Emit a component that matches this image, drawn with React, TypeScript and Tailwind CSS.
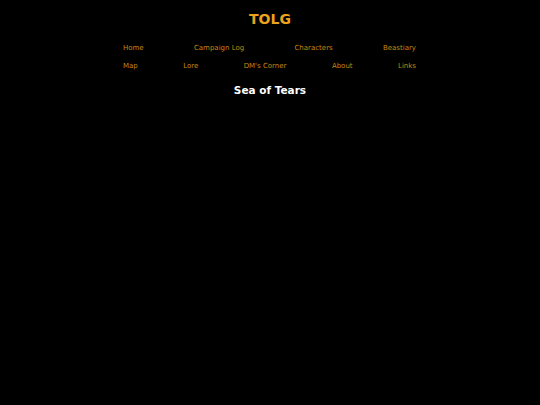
import React from 'react';

const row1 = ['Home', 'Campaign Log', 'Characters', 'Beastiary'];
const row2 = ['Map', 'Lore', "DM's Corner", 'About', 'Links'];

const App: React.FC = () => {
  return (
    <div className="min-h-[405px] bg-black font-['DejaVu_Sans',sans-serif]">
      <header className="pt-[10px] text-center">
        <h1 className="text-[14px] font-bold leading-[18px] text-[#eda21c]">TOLG</h1>
      </header>
      <nav className="mx-auto mt-[15px] w-[294px] pr-[1px]">
        <ul className="flex justify-between text-[7px] leading-[10px] text-[#c4870f]">
          {row1.map((item) => (
            <li key={item}>{item}</li>
          ))}
        </ul>
        <ul className="mt-[8px] flex justify-between text-[7px] leading-[10px] text-[#c4870f]">
          {row2.map((item) => (
            <li key={item}>{item}</li>
          ))}
        </ul>
      </nav>
      <h2 className="mt-[12px] text-center text-[10.5px] font-bold leading-[14px] text-white">Sea of Tears</h2>
    </div>
  );
};

export default App;
